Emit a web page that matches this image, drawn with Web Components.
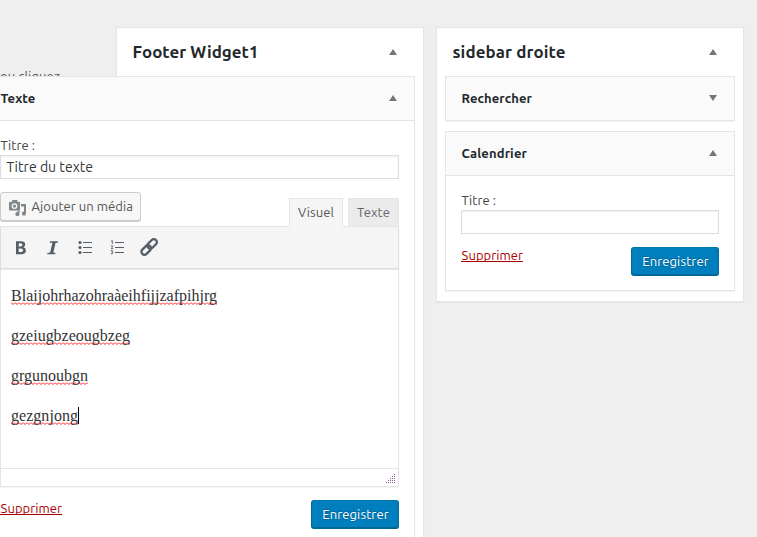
<!DOCTYPE html>
<html lang="fr">
<head>
<meta charset="utf-8">
<title>Widgets</title>
<style>
html,body{margin:0;height:537px;overflow:hidden;background:#efefef}
body{font:13px/19px Ubuntu,"Noto Sans","Open Sans",sans-serif;color:#444}
</style>
</head>
<body>
<widgets-screen></widgets-screen>
<script>
function define(name, html, setup) {
  const tpl = document.createElement('template');
  tpl.innerHTML = html;
  customElements.define(name, class extends HTMLElement {
    connectedCallback() {
      if (this.shadowRoot) return;
      this.attachShadow({mode: 'open'}).append(tpl.content.cloneNode(true));
      if (setup) setup(this, this.shadowRoot);
    }
  });
}

/* Text run tracked to a given advance width */
define('text-run', `<style>:host{display:inline-block;white-space:pre}span{display:inline-block;text-decoration:inherit}</style><span><slot></slot></span>`, (el, root) => {
  const s = root.querySelector('span'), w = +el.getAttribute('width'), n = el.textContent.length;
  const d = (w - s.getBoundingClientRect().width) / n;
  s.style.letterSpacing = d.toFixed(3) + 'px';
});

define('toggle-arrow', `<style>:host{display:block;width:8px;height:6px}svg{display:block}:host([down]) svg{transform:scaleY(-1)}</style>
<svg width="8" height="6"><path d="M4 0L8 6H0Z" fill="#72777c"/></svg>`);

define('widget-panel', `<style>
:host{display:block;box-sizing:border-box;width:308px;padding:0 8px;background:#fff;border:1px solid #e5e5e5;box-shadow:0 1px 1px rgba(0,0,0,.04)}
header{display:flex;justify-content:space-between;align-items:center;height:48px;padding:0 18px 0 7.500px;font-size:16.900px;font-weight:600;color:#23282d}
slot[name=title]::slotted(*){padding-bottom:2px}
.list{display:flex;flex-direction:column;gap:10px}
</style><header><slot name="title"></slot><toggle-arrow></toggle-arrow></header><div class="list"><slot></slot></div>`);

define('widget-card', `<style>
:host{display:block;box-sizing:border-box;background:#fff;border:1px solid #e5e5e5;box-shadow:0 1px 1px rgba(0,0,0,.04)}
header{display:flex;justify-content:space-between;align-items:center;height:43px;padding:0 17px 0 15.500px;background:#fafafa;font-weight:600;color:#23282d}
toggle-arrow{margin-bottom:1px}
section{padding:15px 15px var(--card-bottom,14px);border-top:1px solid #e5e5e5}
:host([collapsed]) section{display:none}
</style><header><slot name="title"></slot><toggle-arrow></toggle-arrow></header><section><slot></slot></section>`,
(el, r) => { if (el.hasAttribute('collapsed')) r.querySelector('toggle-arrow').setAttribute('down', ''); });

define('title-field', `<style>
:host{display:block}
label{display:block;height:19px;padding-left:.5px}
.box{display:flex;align-items:center;box-sizing:border-box;height:24px;padding:0 5.500px;border:1px solid #ddd;background:#fff;box-shadow:inset 0 1px 2px rgba(0,0,0,.07);font-size:14px;color:#32373c}
</style><label><text-run width="34.500">Titre :</text-run></label><div class="box"><slot></slot></div>`);

define('widget-actions', `<style>
:host{display:flex;justify-content:space-between;align-items:flex-start;margin-top:13px}
a{display:block;color:#a00;height:15px;margin-top:-1px;padding-left:.5px;line-height:19px;border-bottom:1px solid #a00}
button{display:flex;justify-content:center;box-sizing:border-box;width:88px;height:29px;padding:0 0 0 1px;background:#007fbe;border:1px solid;border-color:#0073aa #006799 #006799;border-radius:3px;box-shadow:inset 0 -1px 0 #006799;color:#fff;font:inherit;line-height:26px;text-shadow:0 -1px 1px #006799,0 1px 1px #006799}
</style><a><text-run width="61.500">Supprimer</text-run></a><button><text-run width="66.500">Enregistrer</text-run></button>`);

define('media-button', `<style>
:host{display:flex;align-items:center;box-sizing:border-box;width:141px;height:29px;padding:0 0 1px 7px;gap:3.500px;border:1px solid #ccc;border-radius:3px;background:#f7f7f7;box-shadow:0 1px 0 #ccc;color:#555}
svg{flex:none;margin-top:4px}
</style><svg width="20" height="18" viewBox="0 0 20 18"><path fill="#82878c" fill-rule="evenodd" d="M1 3H3.500L4.500 1H9L10 3H12V11.500H1ZM6.500 4.200A2.900 2.900 0 1 0 6.500 10A2.900 2.900 0 0 0 6.500 4.200ZM6.500 5.500A1.600 1.600 0 1 1 6.500 8.700A1.600 1.600 0 0 1 6.500 5.500Z"/><path fill="#82878c" d="M13 5H18V14.500A2.100 2.100 0 1 1 16 12.500V7.500H13ZM9.500 11.500H11.500V15A2.100 2.100 0 1 1 9.500 13Z"/></svg><text-run width="101.500">Ajouter un média</text-run>`);

define('editor-tab', `<style>
:host{display:flex;justify-content:center;align-items:center;box-sizing:border-box;height:29px;width:51px;border:1px solid #e5e5e5;background:#ebebeb;color:#666;padding-bottom:1px}
:host([active]){width:54px;background:#f5f5f5;border-bottom-color:#f5f5f5;color:#555}
</style><slot></slot>`);

define('tool-icons', `<style>:host{display:block}svg{display:block}</style>
<svg width="180" height="41" viewBox="0 227 180 41" fill="#555d66">
<path fill-rule="evenodd" d="M16 241.300H21Q25.200 241.300 25.200 244.500Q25.200 246.700 23.400 247.300Q25.900 247.900 25.900 250.500Q25.900 254.200 21.500 254.200H16ZM18.700 243.300V246.500H20.500Q22.500 246.500 22.500 244.800Q22.500 243.300 20.500 243.300ZM18.700 248.400V252.100H20.800Q23.100 252.100 23.100 250.200Q23.100 248.400 20.800 248.400Z"/>
<path d="M50 241.300H58L57.700 242.800H55.600L53.300 252.700H55.500L55.200 254.200H47.200L47.600 252.700H50.100L52.400 242.800H49.700Z"/>
<circle cx="80" cy="242.500" r="1.600"/><circle cx="80" cy="247.500" r="1.600"/><circle cx="80" cy="252.500" r="1.600"/><path d="M83 242h9v1h-9zM83 247h9v1h-9zM83 252h9v1h-9z"/>
<path d="M115 242h9v1h-9zM115 247h9v1h-9zM115 252h9v1h-9z"/>
<path fill="none" stroke="#555d66" stroke-width=".9" d="M111 241.300L112.300 240.500V244M110.800 246Q113 245.200 112.900 246.400Q112.700 247.300 111 248.600H113.300M110.900 250.600Q113 250.200 112.800 251.300Q112.500 252 111.600 252Q113.100 252.100 112.900 253.200Q112.500 254.300 110.800 253.800"/>
<g fill="none" stroke="#555d66" stroke-width="2.300"><rect x="-5.500" y="-3" width="11" height="6" rx="3" transform="translate(152.100 243.900) rotate(-45)"/><rect x="-5.500" y="-3" width="11" height="6" rx="3" transform="translate(146.200 250) rotate(-45)"/></g>
</svg>`);

define('misspelled-line', `<style>
:host{display:block;height:20px;margin-bottom:20px;font:16px/20px "Liberation Serif",serif;color:#333}
div{display:flex}
.w{height:20px;background:url("data:image/svg+xml,%3Csvg xmlns='http://www.w3.org/2000/svg' width='4' height='3'%3E%3Cpath d='M0 .5L2 2.5L4 .5' fill='none' stroke='%23f00' stroke-width='.9'/%3E%3C/svg%3E") 0 16px/4px 3px repeat-x}
i{display:none;width:1px;height:17px;background:#000;margin-top:1px}
:host([caret]) i{display:block}
</style><div><span class="w"><slot></slot></span><i></i></div>`);

define('rich-editor', `<style>
:host{display:block;margin-top:13px}
.top{display:flex;justify-content:space-between;align-items:flex-start;height:34px}
.tabs{display:flex;gap:5px;padding-top:6px;position:relative;z-index:1}
.frame{box-sizing:border-box;height:261px;border:1px solid #e5e5e5;box-shadow:0 1px 1px rgba(0,0,0,.04);display:flex;flex-direction:column}
.bar{box-sizing:border-box;flex:none;height:42px;margin:0 -1px;background:#f5f5f5;border:1px solid #ddd;border-top:0;box-shadow:0 1px 1px rgba(0,0,0,.08)}
tool-icons{margin-left:-1px}
.body{flex:1;padding:17px 10px 0}
.status{height:17px;border-top:1px solid #e5e5e5;display:flex;justify-content:flex-end;align-items:flex-end}
svg{margin:0 2px 2px}
</style>
<div class="top"><media-button></media-button><div class="tabs"><editor-tab active><text-run width="36">Visuel</text-run></editor-tab><editor-tab><text-run width="33">Texte</text-run></editor-tab></div></div>
<div class="frame"><div class="bar"><tool-icons></tool-icons></div>
<div class="body"><misspelled-line><text-run width="206">Blaijohrhazohraàeihfijjzafpihjrg</text-run></misspelled-line><misspelled-line><text-run width="119">gzeiugbzeougbzeg</text-run></misspelled-line><misspelled-line><text-run width="77">grgunoubgn</text-run></misspelled-line><misspelled-line caret><text-run width="67">gezgnjong</text-run></misspelled-line></div>
<div class="status"><svg width="10" height="10" fill="#8c5a92"><path d="M8 0h1v1h-1zM6 2h1v1h-1zM8 2h1v1h-1zM4 4h1v1h-1zM6 4h1v1h-1zM8 4h1v1h-1zM2 6h1v1h-1zM4 6h1v1h-1zM6 6h1v1h-1zM8 6h1v1h-1zM0 8h1v1h-1zM2 8h1v1h-1zM4 8h1v1h-1zM6 8h1v1h-1zM8 8h1v1h-1z"/></svg></div></div>`);

define('widgets-screen', `<style>
:host{display:grid;grid-template-columns:116px 308px 308px;box-sizing:border-box;height:537px;padding-top:27px;align-items:start;overflow:hidden}
.hint{padding-top:40px;color:#555}
.footer{height:510px;border-bottom:0}
.side{margin-left:12px;padding-bottom:10px}
.wide{margin-left:-141px;position:relative;width:431px;border-bottom:0;--card-bottom:8px}
</style>
<div class="hint"><text-run width="60">ou cliquez</text-run></div>
<widget-panel class="footer"><text-run slot="title" width="126">Footer Widget1</text-run>
<widget-card class="wide"><text-run slot="title" width="35">Texte</text-run><title-field><text-run width="86.500">Titre du texte</text-run></title-field><rich-editor></rich-editor><widget-actions></widget-actions></widget-card></widget-panel>
<widget-panel class="side"><text-run slot="title" width="113">sidebar droite</text-run>
<widget-card collapsed><text-run slot="title" width="70.500">Rechercher</text-run></widget-card>
<widget-card><text-run slot="title" width="65.500">Calendrier</text-run><title-field></title-field><widget-actions></widget-actions></widget-card></widget-panel>`);
</script>
</body>
</html>
